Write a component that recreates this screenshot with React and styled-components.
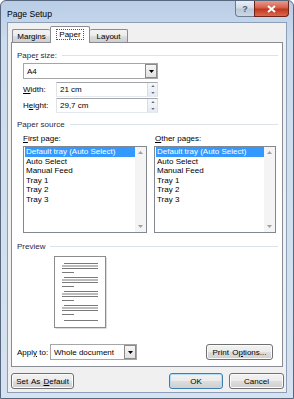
import React from 'react'
import styled, { createGlobalStyle } from 'styled-components'

const GlobalStyle = createGlobalStyle`
  html, body { margin: 0; padding: 0; background: #ffffff; }
  body { font-family: "Liberation Sans", Arial, sans-serif; font-size: 8px; color: #000; }
  * { box-sizing: border-box; }
`

const Window = styled.div`
  width: 294px;
  height: 399px;
  border: 1px solid #56677e;
  border-radius: 6px 6px 0 0;
  background: linear-gradient(#b9cde6, #cddcee 40px, #d6e2f0);
  display: flex;
  flex-direction: column;
`

const TitleBar = styled.div`
  height: 21px;
  display: flex;
  align-items: flex-start;
`

const Title = styled.div`
  font-size: 8.6px;
  padding: 8px 0 0 6px;
  color: #000;
`

const Caption = styled.div`
  margin-left: auto;
  margin-right: 4px;
  display: flex;
`

const CaptionButton = styled.div`
  width: ${p => p.$w}px;
  height: 16px;
  border: 1px solid ${p => (p.$close ? '#6e2418' : '#6b7d94')};
  border-top: none;
  margin-left: -1px;
  border-radius: ${p => (p.$close ? '0 0 4px 0' : '0 0 0 4px')};
  background: ${p =>
    p.$close
      ? 'linear-gradient(#e89a8c, #d4604c 45%, #c2361f 55%, #d86a4f)'
      : 'linear-gradient(#e9eff6, #d2dce8 45%, #bac8d9 55%, #cbd8e6)'};
  display: flex;
  align-items: center;
  justify-content: center;
  color: ${p => (p.$close ? '#fff' : '#4a5a70')};
  font-size: 9px;
  font-weight: bold;
`

const Client = styled.div`
  margin: 0 6px 0 6px;
  height: 371px;
  border: 1px solid #8d9fb8;
  background: #f0f0f0;
  display: flex;
  flex-direction: column;
`

const TabStrip = styled.div`
  height: 19px;
  padding-left: 4px;
  display: flex;
  align-items: flex-end;
`

const Tab = styled.div`
  position: relative;
  z-index: ${p => (p.$active ? 2 : 1)};
  height: ${p => (p.$active ? 17 : 13)}px;
  width: ${p => p.$w}px;
  margin-bottom: ${p => (p.$active ? -1 : 0)}px;
  border: 1px solid #898c95;
  border-bottom: none;
  border-left: ${p => (p.$first || p.$active ? '1px solid #898c95' : 'none')};
  border-right: ${p => (p.$beforeActive ? 'none' : '1px solid #898c95')};
  border-radius: 2px 2px 0 0;
  background: ${p => (p.$active ? '#ffffff' : 'linear-gradient(#f3f3f3, #ebebeb 50%, #dddddd 51%, #cfcfcf)')};
  display: flex;
  align-items: center;
  justify-content: center;
  padding-bottom: ${p => (p.$active ? 2 : 0)}px;
`

const FocusText = styled.span`
  outline: 1px dotted #555;
  padding: 0 2px;
  line-height: 9px;
`

const Panel = styled.div`
  position: relative;
  z-index: 1;
  width: 272px;
  height: 325px;
  margin-left: 3px;
  border: 1px solid #898c95;
  background: #fff;
  display: flex;
  flex-direction: column;
  padding: 0 4px 0 5px;
`

const GroupHeader = styled.div`
  display: flex;
  align-items: center;
  height: 10px;
  margin-top: ${p => p.$mt}px;
  color: #1e2a44;
  &::after {
    content: '';
    flex: 1;
    height: 1px;
    margin-left: 5px;
    background: #dbe3ea;
  }
`

const U = styled.span`
  text-decoration: underline;
`

const Indent = styled.div`
  padding-left: 6px;
  display: flex;
  flex-direction: column;
`

const Combo = styled.div`
  width: ${p => p.$w}px;
  height: 16px;
  margin-top: ${p => p.$mt || 0}px;
  border: 1px solid #a6a6a6;
  background: #fff;
  display: flex;
  align-items: center;
  padding-left: 3px;
`

const ComboText = styled.span`
  flex: 1;
`

const DropButton = styled.div`
  width: 12px;
  height: 14px;
  border: 1px solid #8a8a8a;
  background: linear-gradient(#f6f6f6, #e2e2e2);
  display: flex;
  align-items: center;
  justify-content: center;
`

const FieldRow = styled.div`
  display: flex;
  align-items: center;
  margin-top: ${p => p.$mt}px;
`

const FieldLabel = styled.div`
  width: 33px;
`

const SpinInput = styled.div`
  width: 102px;
  height: 15px;
  border: 1px solid #abadb3;
  border-top-color: #a3a6ad;
  border-left-color: #e2e3ea;
  border-right-color: #dbdfe6;
  border-bottom-color: #e3e9ef;
  display: flex;
  align-items: center;
  padding-left: 3px;
`

const Spinner = styled.div`
  width: 10px;
  height: 13px;
  display: flex;
  flex-direction: column;
  border-left: 1px solid #d7dde4;
  background: linear-gradient(#f6f7f9, #e6ebf0);
`

const SpinHalf = styled.div`
  flex: 1;
  display: flex;
  align-items: center;
  justify-content: center;
`

const Columns = styled.div`
  display: grid;
  grid-template-columns: 124px 122px;
  column-gap: 7px;
  padding-left: 6px;
  margin-top: 5px;
`

const ColLabel = styled.div`
  height: 10px;
  padding-left: ${p => p.$pl || 0}px;
`

const ListBox = styled.div`
  margin-top: 2px;
  height: 87px;
  border: 1px solid #828790;
  display: flex;
  background: #fff;
`

const ListItems = styled.div`
  flex: 1;
  padding-left: 1px;
  display: flex;
  flex-direction: column;
`

const ListItem = styled.div`
  height: 9.5px;
  line-height: 9.5px;
  padding-left: 1px;
  background: ${p => (p.$selected ? '#3399ff' : 'transparent')};
  color: ${p => (p.$selected ? '#fff' : '#000')};
  white-space: nowrap;
`

const ScrollBar = styled.div`
  width: 11px;
  background: #f4f4f4;
  display: flex;
  flex-direction: column;
  justify-content: space-between;
  align-items: center;
  padding: 4px 0;
`

const PreviewBox = styled.div`
  margin: 5px 0 0 37px;
  width: 53px;
  height: 73px;
`

const BottomRow = styled.div`
  display: flex;
  align-items: center;
  margin-top: ${p => p.$mt}px;
`

const Button = styled.div`
  width: ${p => p.$w}px;
  height: 16px;
  margin-left: ${p => p.$ml || 0}px;
  border: 1px solid ${p => (p.$default ? '#3c7fb1' : '#707070')};
  border-radius: 3px;
  box-shadow: ${p => (p.$default ? 'inset 0 0 0 1px #b6dcf5' : 'inset 0 0 0 1px #fbfbfb')};
  background: linear-gradient(#f2f2f2, #ebebeb 50%, #dddddd 51%, #cfcfcf);
  display: flex;
  align-items: center;
  justify-content: center;
  white-space: pre;
  word-spacing: 1px;
`

const Footer = styled.div`
  display: flex;
  align-items: center;
  margin-top: 6px;
  padding-left: 3px;
`

const Arrow = ({ dir = 'down', color = '#000', w = 5, h = 3 }) => (
  <svg width={w} height={h} viewBox="0 0 5 3" style={{ display: 'block' }}>
    {dir === 'down' ? <path d="M0 0H5L2.5 3Z" fill={color} /> : <path d="M0 3H5L2.5 0Z" fill={color} />}
  </svg>
)

const PagePreview = () => {
  const paras = [0, 1, 2, 3]
  return (
    <svg width="53" height="73" viewBox="0 0 53 73">
      <rect x="1.5" y="1.5" width="51" height="71" fill="#b8b8b8" />
      <rect x="0.5" y="0.5" width="51" height="71" fill="#fff" stroke="#8c8c8c" />
      {paras.map(i => {
        const y = 7.5 + i * 14
        return (
          <g key={i} stroke="#7a7a7a" strokeWidth="1">
            <line x1="10" x2="44" y1={y} y2={y} />
            <line x1="8" x2="44" y1={y + 2.5} y2={y + 2.5} />
            <line x1="8" x2="44" y1={y + 5} y2={y + 5} />
            <line x1="8" x2="20" y1={y + 9} y2={y + 9} />
          </g>
        )
      })}
      <line x1="10" x2="44" y1="64.5" y2="64.5" stroke="#7a7a7a" />
    </svg>
  )
}

const trays = ['Default tray (Auto Select)', 'Auto Select', 'Manual Feed', 'Tray 1', 'Tray 2', 'Tray 3']

const TrayList = () => (
  <ListBox>
    <ListItems>
      {trays.map((t, i) => (
        <ListItem key={t} $selected={i === 0}>
          {t}
        </ListItem>
      ))}
    </ListItems>
    <ScrollBar>
      <Arrow dir="up" color="#a0a0a0" />
      <Arrow dir="down" color="#a0a0a0" />
    </ScrollBar>
  </ListBox>
)

const SpinField = ({ label, value, mt }) => (
  <FieldRow $mt={mt}>
    <FieldLabel>{label}</FieldLabel>
    <SpinInput>
      <ComboText>{value}</ComboText>
      <Spinner>
        <SpinHalf>
          <Arrow dir="up" color="#5c6f86" w={4} h={2} />
        </SpinHalf>
        <SpinHalf>
          <Arrow dir="down" color="#5c6f86" w={4} h={2} />
        </SpinHalf>
      </Spinner>
    </SpinInput>
  </FieldRow>
)

export default function App() {
  return (
    <>
      <GlobalStyle />
      <Window>
        <TitleBar>
          <Title>Page Setup</Title>
          <Caption>
            <CaptionButton $w={20}>?</CaptionButton>
            <CaptionButton $w={35} $close>
              <svg width="9" height="8" viewBox="0 0 9 8">
                <path d="M1 1L8 7M8 1L1 7" stroke="#fff" strokeWidth="2" />
              </svg>
            </CaptionButton>
          </Caption>
        </TitleBar>
        <Client>
          <TabStrip>
            <Tab $w={38} $first $beforeActive>Margins</Tab>
            <Tab $w={40} $active>
              <FocusText>Paper</FocusText>
            </Tab>
            <Tab $w={38}>Layout</Tab>
          </TabStrip>
          <Panel>
            <GroupHeader $mt={7}>
              <span>
                Pape<U>r</U> size:
              </span>
            </GroupHeader>
            <Indent>
              <Combo $w={135} $mt={3}>
                <ComboText>A4</ComboText>
                <DropButton>
                  <Arrow />
                </DropButton>
              </Combo>
              <SpinField
                mt={3}
                label={
                  <span>
                    <U>W</U>idth:
                  </span>
                }
                value="21 cm"
              />
              <SpinField
                mt={1}
                label={
                  <span>
                    H<U>e</U>ight:
                  </span>
                }
                value="29,7 cm"
              />
            </Indent>
            <GroupHeader $mt={6}>Paper source</GroupHeader>
            <Columns>
              <div>
                <ColLabel>
                  <U>F</U>irst page:
                </ColLabel>
                <TrayList />
              </div>
              <div>
                <ColLabel $pl={1}>
                  <U>O</U>ther pages:
                </ColLabel>
                <TrayList />
              </div>
            </Columns>
            <GroupHeader $mt={8}>Preview</GroupHeader>
            <PreviewBox>
              <PagePreview />
            </PreviewBox>
            <BottomRow $mt={15}>
              <FieldLabel>
                Appl<U>y</U> to:
              </FieldLabel>
              <Combo $w={87}>
                <ComboText>Whole document</ComboText>
                <DropButton>
                  <Arrow />
                </DropButton>
              </Combo>
              <Button $w={67} $ml={69}>
                Print O<U>p</U>tions...
              </Button>
            </BottomRow>
          </Panel>
          <Footer>
            <Button $w={63}>
              {'Set As '}
              <U>D</U>efault
            </Button>
            <Button $w={54} $ml={95} $default>
              OK
            </Button>
            <Button $w={55} $ml={6}>
              Cancel
            </Button>
          </Footer>
        </Client>
      </Window>
    </>
  )
}
